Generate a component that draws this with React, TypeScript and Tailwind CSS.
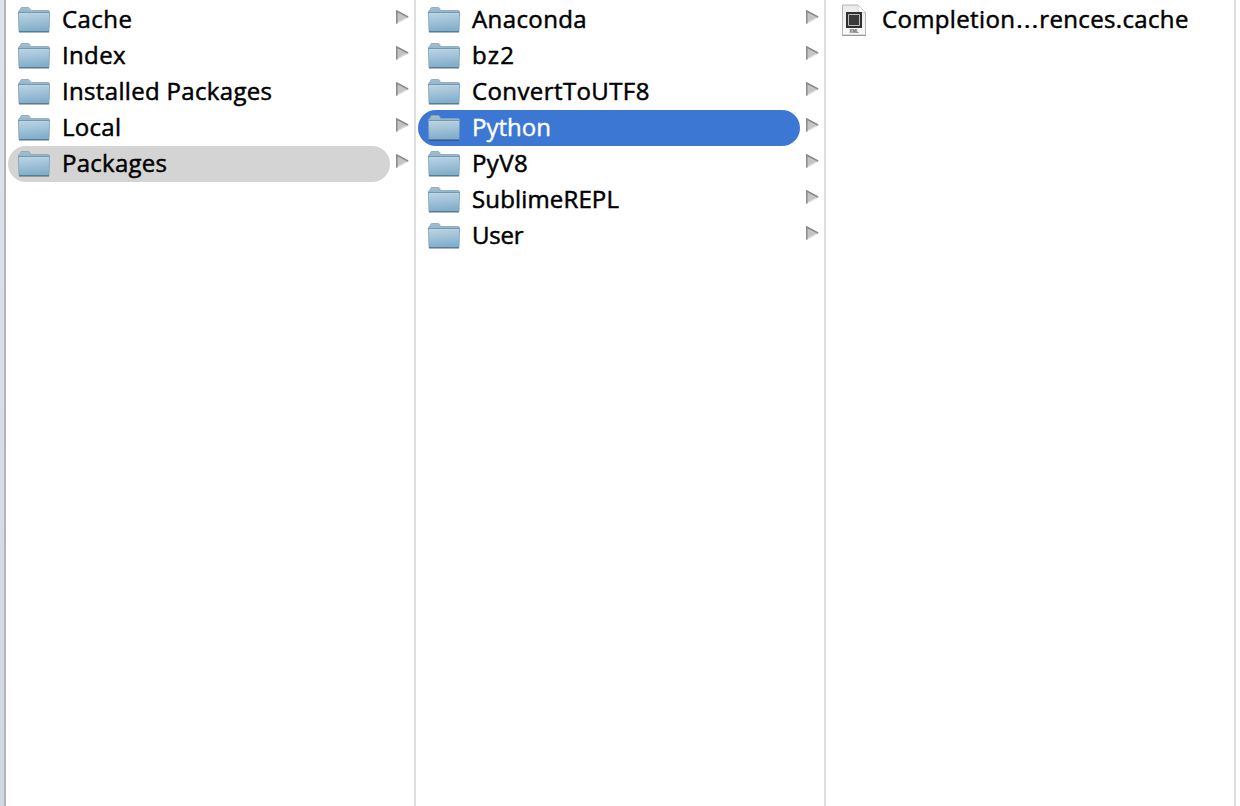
import React from "react";

type Item = { name: string; tracking: string; state?: "path" | "active" };

const libraryItems: Item[] = [
  { name: "Cache", tracking: "tracking-[0.45px]" },
  { name: "Index", tracking: "tracking-[0.35px]" },
  { name: "Installed Packages", tracking: "tracking-[0.33px]" },
  { name: "Local", tracking: "tracking-[0.3px]" },
  { name: "Packages", tracking: "tracking-[0.25px]", state: "path" },
];

const packageItems: Item[] = [
  { name: "Anaconda", tracking: "tracking-[0.4px]" },
  { name: "bz2", tracking: "tracking-[1.1px]" },
  { name: "ConvertToUTF8", tracking: "tracking-[0.4px]" },
  { name: "Python", tracking: "tracking-[0px]", state: "active" },
  { name: "PyV8", tracking: "tracking-[0.4px]" },
  { name: "SublimeREPL", tracking: "tracking-[0.15px]" },
  { name: "User", tracking: "tracking-[-0.2px]" },
];

function FolderIcon() {
  return (
    <svg width="34" height="28" viewBox="0 0 34 28" className="block shrink-0">
      <defs>
        <linearGradient id="folderFront" x1="0" y1="0" x2="0.15" y2="1">
          <stop offset="0" stopColor="#bcd4e3" />
          <stop offset="0.5" stopColor="#a0c2d8" />
          <stop offset="1" stopColor="#80aecb" />
        </linearGradient>
        <linearGradient id="folderBack" x1="0" y1="0" x2="0" y2="1">
          <stop offset="0" stopColor="#a4bfd0" />
          <stop offset="1" stopColor="#8fb1c6" />
        </linearGradient>
      </defs>
      <path d="M2 26.5H32" stroke="#000" strokeOpacity="0.28" strokeWidth="1" />
      <path d="M1.5 7V5.5Q1.5 4.5 3 4.5L3.5 2.5Q3.8 1.5 5 1.5H11Q12.2 1.5 12.7 2.5L13.5 4.5H31Q32.5 4.5 32.5 6V8H1.5Z" fill="url(#folderBack)" stroke="#86a5b9" strokeWidth="0.8" />
      <path d="M1.4 6.7H32.6L32 25.6H2Z" fill="url(#folderFront)" stroke="#7ea0b6" strokeWidth="0.8" />
      <path d="M1.5 6.6H32.5" stroke="#6c95b0" strokeWidth="0.9" />
      <path d="M2.3 7.6H31.7" stroke="#c6dce7" strokeWidth="0.7" />
      <path d="M2 25.5H32" stroke="#567d97" strokeWidth="1" />
    </svg>
  );
}

function DisclosureArrow() {
  return (
    <svg width="14" height="15" viewBox="0 0 14 15" className="block shrink-0">
      <path d="M0 0L12.8 7L0 14Z" fill="#c4c4c4" />
      <path d="M0 13.5L12.4 7" stroke="#dedede" strokeWidth="1.2" />
      <path d="M0.8 13.4V1L12 7" fill="none" stroke="#8a8a8a" strokeWidth="1.5" />
    </svg>
  );
}

function XmlFileIcon() {
  return (
    <svg width="26" height="33" viewBox="0 0 26 33" className="block shrink-0">
      <defs>
        <linearGradient id="page" x1="0" y1="0" x2="0" y2="1">
          <stop offset="0" stopColor="#eaeaea" />
          <stop offset="1" stopColor="#fafafa" />
        </linearGradient>
      </defs>
      <path d="M1.5 1H17L24.5 8.5V31H1.5Z" fill="url(#page)" stroke="#b0b0b0" strokeWidth="0.9" />
      <path d="M1 31.5H25" stroke="#8c8c8c" strokeWidth="0.8" />
      <path d="M17 1L17.3 8.3L24.5 8.5Z" fill="#fff" stroke="#c4c4c4" strokeWidth="0.7" />
      <path d="M5 8H21V24H5Z" fill="#303030" />
      <path d="M7.5 10.5H18.5V21.5H7.5Z" fill="#3a3a3a" stroke="#bdbdbd" strokeWidth="1" />
      <text x="13" y="28.9" textAnchor="middle" fontFamily="Liberation Sans, sans-serif" fontSize="4.6" fontWeight="700" fill="#555">
        XML
      </text>
    </svg>
  );
}

function FolderRow({ item }: { item: Item }) {
  const pill =
    item.state === "active"
      ? "bg-[#3d77d4] text-white [-webkit-text-stroke:0.4px_white]"
      : item.state === "path"
        ? "bg-[#d4d4d4] text-black [-webkit-text-stroke:0.5px_black]"
        : "text-black [-webkit-text-stroke:0.5px_black]";
  return (
    <li className="flex h-9 items-center">
      <div className={`flex h-9 w-[382px] shrink-0 items-center gap-[11px] rounded-full pl-[9px] ${pill}`}>
        <FolderIcon />
        <span className={`pb-[3px] leading-8 ${item.tracking}`}>{item.name}</span>
      </div>
      <div className="pb-[5px] pl-1.5">
        <DisclosureArrow />
      </div>
    </li>
  );
}

function FolderColumn({ items }: { items: Item[] }) {
  return (
    <ul className="w-[410px] shrink-0 border-r-2 border-[#dedede] pt-0.5 pl-0.5">
      {items.map((item) => (
        <FolderRow key={item.name} item={item} />
      ))}
    </ul>
  );
}

export default function App() {
  return (
    <div className="flex h-[806px] w-[1240px] overflow-hidden bg-white font-['Open_Sans',sans-serif] text-[24px] font-medium whitespace-nowrap">
      <div className="w-1.5 shrink-0 border-r-2 border-[#b5b5b5] bg-linear-to-b from-[#dfe4ec] to-[#d0d8e2]" />
      <FolderColumn items={libraryItems} />
      <FolderColumn items={packageItems} />
      <ul className="w-[410px] shrink-0 border-r-2 border-[#dedede] pt-0.5 pl-[15px]">
        <li className="flex h-9 items-center gap-[15px] text-black">
          <XmlFileIcon />
          <span className="pb-[3px] leading-8 tracking-[0.35px] [-webkit-text-stroke:0.5px_black]">
            Completion<span className="mx-[2.5px] inline-block scale-x-125 font-normal [-webkit-text-stroke:0px]">…</span>rences.cache
          </span>
        </li>
      </ul>
    </div>
  );
}
